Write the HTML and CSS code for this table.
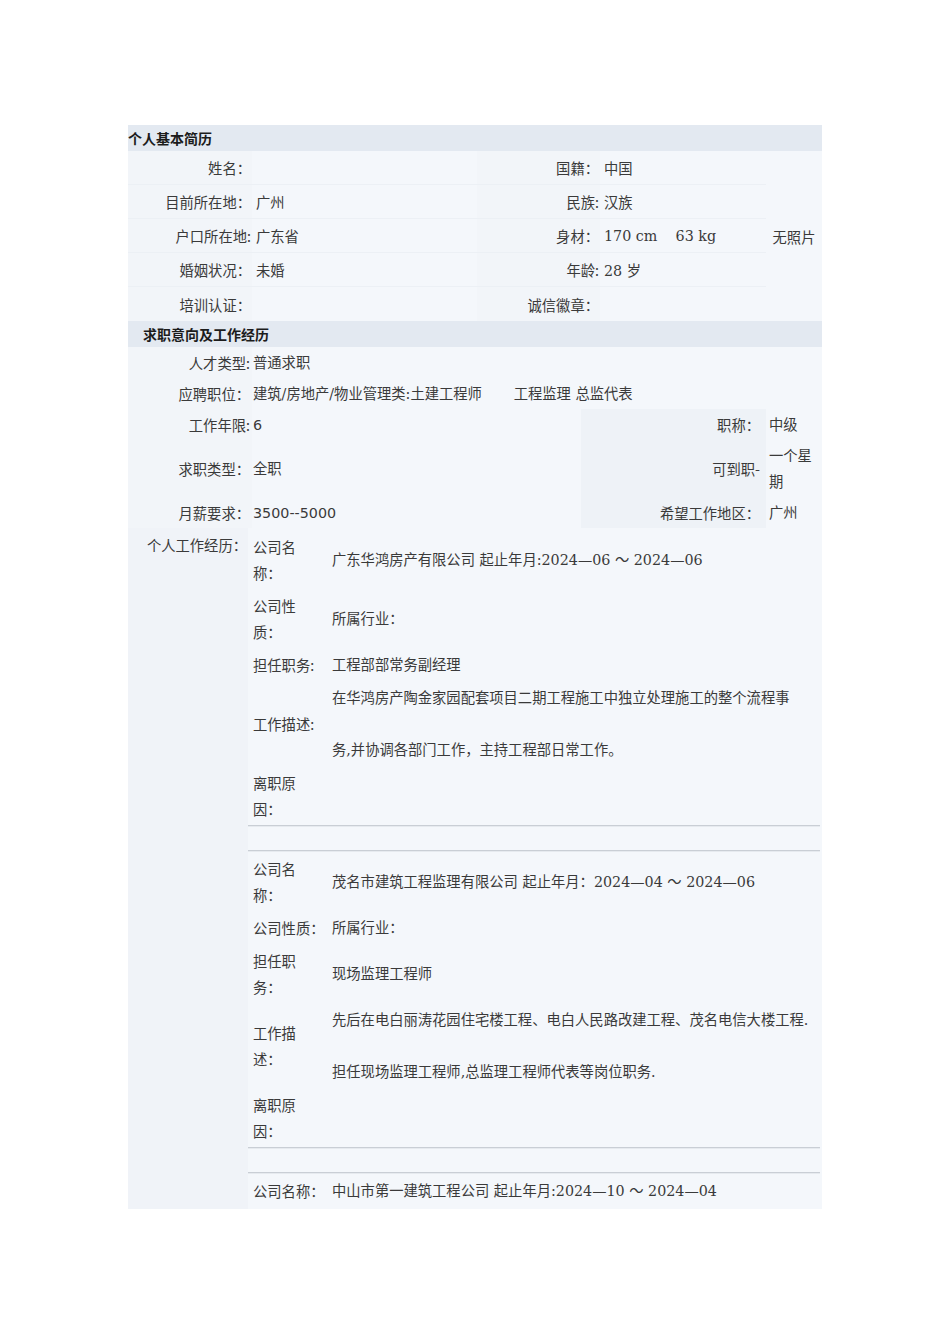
FILE: index.html
```html
<!DOCTYPE html>
<html lang="zh-CN">
<head>
<meta charset="utf-8">
<title>个人简历</title>
<link rel="stylesheet" href="styles.css">
</head>
<body>
<div class="resume">
  <div class="sec-head">个人基本简历</div>
  <div class="basic">
    <div class="lbl">姓名：</div><div class="val"></div><div class="lbl">国籍：</div><div class="val">中国</div>
    <div class="photo">无照片</div>
    <div class="lbl">目前所在地：</div><div class="val">广州</div><div class="lbl">民族:</div><div class="val">汉族</div>
    <div class="lbl">户口所在地:</div><div class="val">广东省</div><div class="lbl">身材：</div><div class="val">170 cm&nbsp;&nbsp;&nbsp; 63 kg</div>
    <div class="lbl">婚姻状况：</div><div class="val">未婚</div><div class="lbl">年龄:</div><div class="val">28 岁</div>
    <div class="lbl last">培训认证：</div><div class="val last"></div><div class="lbl last">诚信徽章：</div><div class="val last"></div>
  </div>

  <div class="sec-head indent">求职意向及工作经历</div>
  <div class="intent">
    <div class="lbl">人才类型:</div><div class="val wide">普通求职</div>
    <div class="lbl">应聘职位：</div><div class="val wide">建筑/房地产/物业管理类:土建工程师&nbsp;&nbsp;&nbsp;&nbsp;&nbsp;&nbsp; 工程监理 总监代表</div>
    <div class="lbl">工作年限:</div><div class="val sans">6</div><div class="sublbl">职称：</div><div class="subval">中级</div>
    <div class="lbl">求职类型：</div><div class="val">全职</div><div class="sublbl">可到职-</div><div class="subval">一个星期</div>
    <div class="lbl">月薪要求：</div><div class="val sans">3500--5000</div><div class="sublbl">希望工作地区：</div><div class="subval">广州</div>
  </div>

  <div class="work">
    <div class="work-lbl">个人工作经历：</div>
    <div class="entries">
      <div class="entry">
        <div class="erow"><div class="elbl">公司名<br>称：</div><div class="eval">广东华鸿房产有限公司 起止年月:2024—06 ～ 2024—06</div></div>
        <div class="erow"><div class="elbl">公司性<br>质：</div><div class="eval">所属行业：</div></div>
        <div class="erow"><div class="elbl">担任职务:</div><div class="eval">工程部部常务副经理</div></div>
        <div class="erow"><div class="elbl">工作描述:</div><div class="eval desc"><div>在华鸿房产陶金家园配套项目二期工程施工中独立处理施工的整个流程事</div><div>务,并协调各部门工作，主持工程部日常工作。</div></div></div>
        <div class="erow"><div class="elbl">离职原<br>因：</div><div class="eval"></div></div>
      </div>
      <div class="rule"></div>
      <div class="spacer"></div>
      <div class="rule"></div>
      <div class="entry">
        <div class="erow"><div class="elbl">公司名<br>称：</div><div class="eval">茂名市建筑工程监理有限公司 起止年月：2024—04 ～ 2024—06</div></div>
        <div class="erow"><div class="elbl">公司性质：</div><div class="eval">所属行业：</div></div>
        <div class="erow"><div class="elbl">担任职<br>务：</div><div class="eval">现场监理工程师</div></div>
        <div class="erow"><div class="elbl">工作描<br>述：</div><div class="eval desc"><div>先后在电白丽涛花园住宅楼工程、电白人民路改建工程、茂名电信大楼工程.</div><div>担任现场监理工程师,总监理工程师代表等岗位职务.</div></div></div>
        <div class="erow"><div class="elbl">离职原<br>因：</div><div class="eval"></div></div>
      </div>
      <div class="rule"></div>
      <div class="spacer"></div>
      <div class="rule"></div>
      <div class="entry last-entry">
        <div class="erow"><div class="elbl">公司名称：</div><div class="eval">中山市第一建筑工程公司 起止年月:2024—10 ～ 2024—04</div></div>
      </div>
    </div>
  </div>
</div>
</body>
</html>
```

FILE: styles.css
```css
html, body {
  margin: 0;
  padding: 0;
  background: #ffffff;
}

body {
  padding-top: 125px;
  font-family: "Noto Sans CJK SC", sans-serif;
  color: #3a3a3a;
}

.resume {
  margin-left: 128px;
  width: 694px;
  background: #f3f6fa;
  font-size: 14.3px;
}

.sec-head {
  height: 26px;
  line-height: 26px;
  background: #e3e9f1;
  font-family: "Noto Sans CJK SC", sans-serif;
  font-weight: bold;
  font-size: 14px;
  color: #1c1c1c;
}

.sec-head.indent {
  padding-left: 15px;
}

.val, .subval, .eval {
  font-family: "DejaVu Serif", "Noto Sans CJK SC", serif;
}

.sans {
  font-family: "DejaVu Sans", "Noto Sans CJK SC", sans-serif;
}

/* Section 1 */
.basic {
  display: grid;
  grid-template-columns: 124px 225px 123px 166px 56px;
  grid-auto-rows: 34px;
}

.basic .lbl,
.basic .val {
  display: flex;
  align-items: center;
  border-bottom: 1px solid #ecf0f5;
}

.basic .lbl {
  justify-content: flex-end;
  padding-right: 1px;
  background: #f2f5f9;
}

.basic .val {
  padding-left: 4px;
  background: #f4f7fb;
}

.basic .last {
  border-bottom: none;
}

.basic .photo {
  grid-column: 5;
  grid-row: 1 / span 5;
  display: flex;
  align-items: center;
  justify-content: center;
  background: #f4f7fb;
  font-family: "Noto Sans CJK SC", sans-serif;
}

/* Section 2 */
.intent {
  display: grid;
  grid-template-columns: 124px 329px 185px 56px;
  line-height: 26px;
}

.intent > div {
  padding: 2.5px 0;
  display: flex;
  align-items: center;
}

.intent .lbl {
  justify-content: flex-end;
  padding-right: 2px;
  background: #f2f5f9;
}

.intent .val {
  padding-left: 1px;
  background: #f4f7fb;
}

.intent .wide {
  grid-column: 2 / span 3;
}

.intent .sublbl {
  justify-content: flex-end;
  padding-right: 6px;
  background: #eef2f7;
  font-family: "Noto Sans CJK SC", sans-serif;
}

.intent .subval {
  padding-left: 3px;
  padding-right: 2px;
  background: #f4f7fb;
}

/* Work experience */
.work {
  display: grid;
  grid-template-columns: 120px 574px;
  line-height: 26px;
}

.work-lbl {
  text-align: right;
  padding: 4px 1px 0 0;
  background: #f0f3f8;
}

.entries {
  padding-top: 2px;
  padding-right: 2px;
  padding-bottom: 2px;
  background: #f4f7fb;
}

.erow {
  display: grid;
  grid-template-columns: 80px 1fr;
  padding: 3.5px 0;
}

.elbl {
  padding-left: 5px;
  align-self: center;
}

.eval {
  padding-left: 4px;
  align-self: center;
}

.desc {
  display: flex;
  flex-direction: column;
  gap: 26px;
}

.rule {
  border-top: 1px solid #c9ced5;
  border-bottom: 1px solid #e6eaef;
}

.spacer {
  height: 23px;
}
```
